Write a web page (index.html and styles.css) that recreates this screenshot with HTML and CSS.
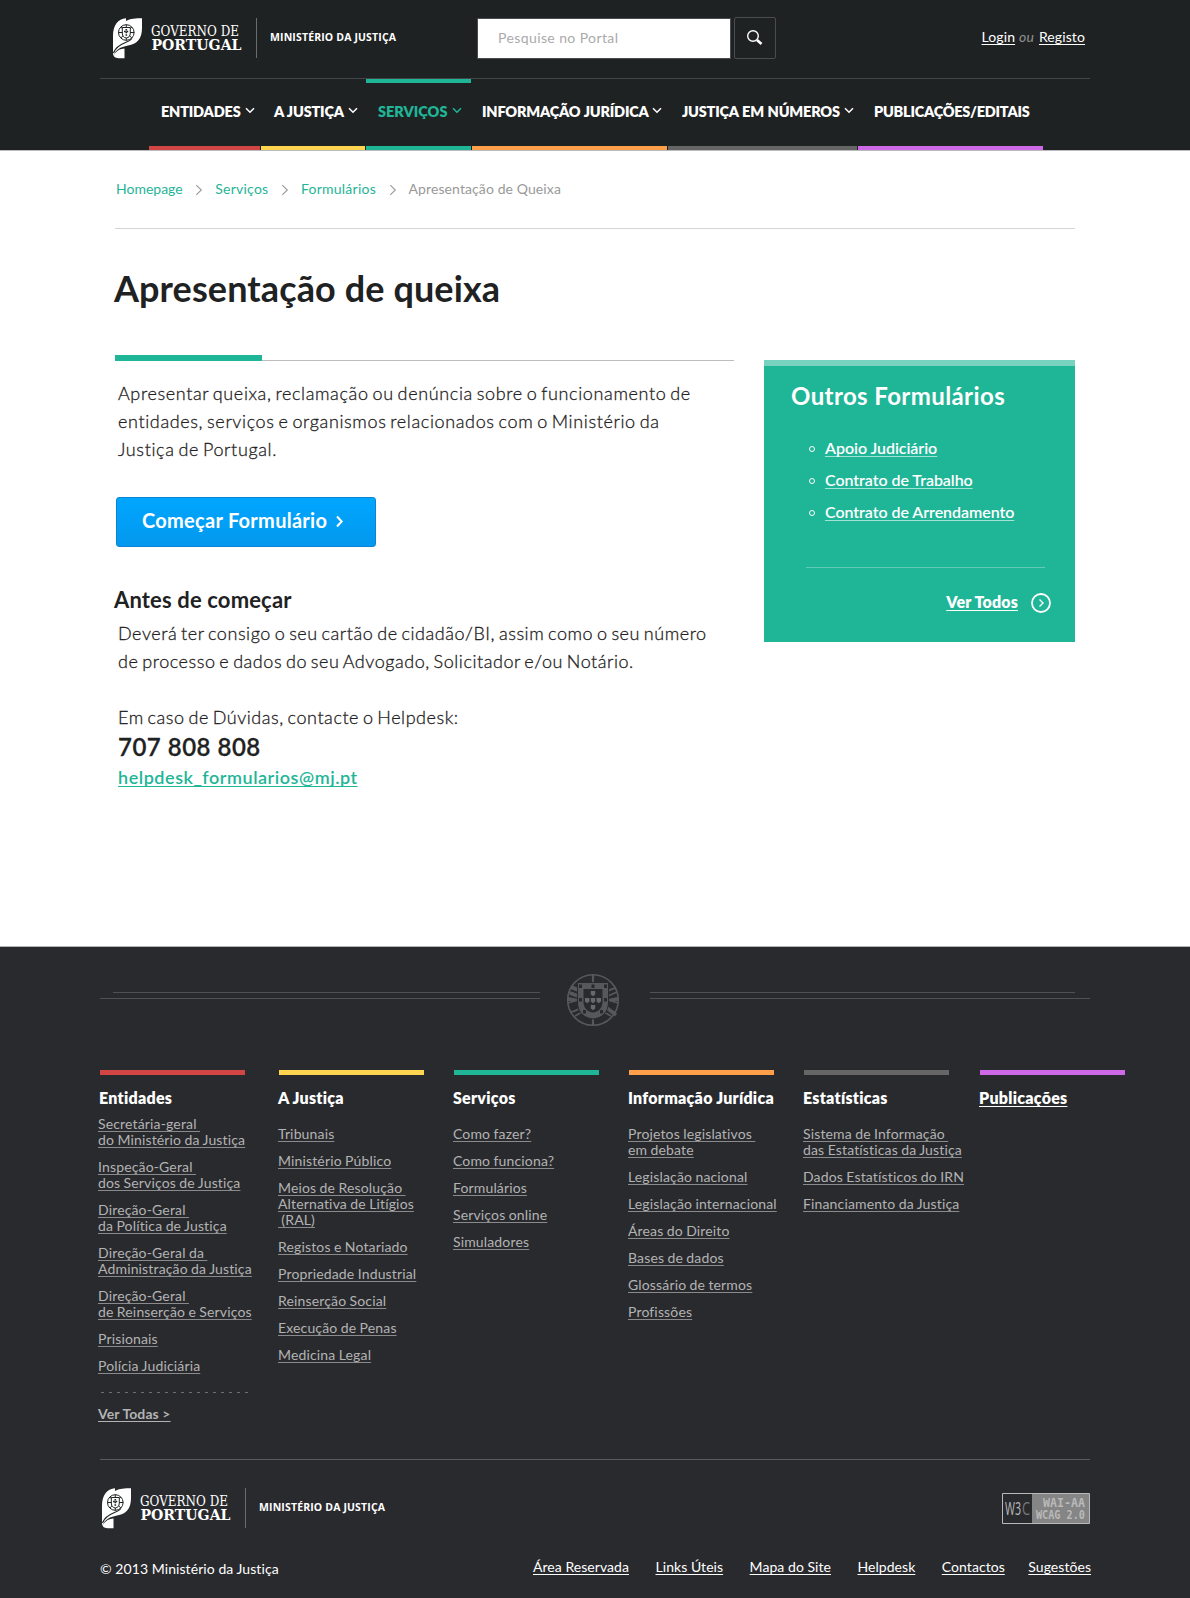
FILE: index.html
```html
<!DOCTYPE html>
<html lang="pt">
<head>
<meta charset="utf-8">
<title>Apresentação de queixa</title>
<link rel="stylesheet" href="styles.css">
</head>
<body>
<svg width="0" height="0" class="defs" aria-hidden="true">
  <defs>
    <symbol id="chevron-down" viewBox="0 0 10 7"><path d="M1 1.2l4 4 4-4" fill="none" stroke="currentColor" stroke-width="1.5"/></symbol>
    <symbol id="chevron-right" viewBox="0 0 8 12"><path d="M1.3 1.2L6.3 6l-5 4.8" fill="none" stroke="currentColor" stroke-width="1.1"/></symbol>
    <symbol id="gov-logo" viewBox="0 0 290 42">
      <path d="M0 38V18C0 7 5 1 13 .2V3C17 .5 23 .2 29 .2V10c0 11-5 16-14 17.500C7 29 2.500 32 1 37c3-5 6-6 10.500-6.500V40.300H7C3 40.300 1 39.500 0 36z" fill="#fff"/>
      <path d="M.5 35c2-6 7-8.500 12-10.500 3-1.200 5-2 6.500-4" fill="none" stroke="#1f2223" stroke-width="1.200"/>
      <g fill="none" stroke="#1f2223" stroke-width="1"><circle cx="13.300" cy="14.500" r="7.800"/><path d="M13.300 6.500v16M5.300 14.500h16M7.800 9l11 11M18.800 9l-11 11"/></g>
      <path d="M9.300 9.500h8V15c0 3-1.500 4.700-4 5-2.500-.3-4-2-4-5z" fill="#fff" stroke="#1f2223"/>
      <path d="M13.300 11v7M11 13.500h4.600" stroke="#1f2223" stroke-width="1.600" stroke-dasharray="1.600 1"/>
      <text x="38" y="18" class="gov-light" textLength="88" lengthAdjust="spacingAndGlyphs">GOVERNO DE</text>
      <text x="38.500" y="32.300" class="gov-bold" textLength="90" lengthAdjust="spacingAndGlyphs">PORTUGAL</text>
      <path d="M143.500 0v40" stroke="#6a6d6e"/>
      <text x="157" y="23" class="gov-ministry" textLength="126" lengthAdjust="spacing">MINISTÉRIO DA JUSTIÇA</text>
    </symbol>
  </defs>
</svg>

<header class="site-header">
  <div class="topbar">
    <svg class="gov-logo" width="290" height="42"><use href="#gov-logo"/></svg>
    <form class="search">
      <span class="search-field">Pesquise no Portal</span>
      <span class="search-button"><svg width="18" height="18" viewBox="0 0 18 18"><circle cx="7" cy="7" r="5.300" fill="none" stroke="#fff" stroke-width="1.400"/><path d="M11 11l4.500 4" stroke="#fff" stroke-width="2.600"/></svg></span>
    </form>
    <div class="account"><a href="#">Login</a><em>ou</em><a href="#">Registo</a></div>
  </div>
  <nav class="main-nav">
    <a class="nav-item red" href="#"><span>ENTIDADES</span><svg width="10" height="7"><use href="#chevron-down"/></svg></a>
    <a class="nav-item yellow" href="#"><span>A JUSTIÇA</span><svg width="10" height="7"><use href="#chevron-down"/></svg></a>
    <a class="nav-item green active" href="#"><span>SERVIÇOS</span><svg width="10" height="7"><use href="#chevron-down"/></svg></a>
    <a class="nav-item orange" href="#"><span>INFORMAÇÃO JURÍDICA</span><svg width="10" height="7"><use href="#chevron-down"/></svg></a>
    <a class="nav-item gray" href="#"><span>JUSTIÇA EM NÚMEROS</span><svg width="10" height="7"><use href="#chevron-down"/></svg></a>
    <a class="nav-item purple" href="#"><span>PUBLICAÇÕES/EDITAIS</span></a>
  </nav>
</header>

<main class="page">
  <nav class="breadcrumb">
    <a href="#">Homepage</a><svg width="8" height="12"><use href="#chevron-right"/></svg><a class="parent" href="#">Serviços</a><svg width="8" height="12"><use href="#chevron-right"/></svg><a class="parent" href="#">Formulários</a><svg width="8" height="12"><use href="#chevron-right"/></svg><span>Apresentação de Queixa</span>
  </nav>
  <h1>Apresentação de queixa</h1>
  <div class="columns">
    <article class="content">
      <div class="accent"></div>
      <p class="lead">Apresentar queixa, reclamação ou denúncia sobre o funcionamento de<br>entidades, serviços e organismos relacionados com o Ministério da<br>Justiça de Portugal.</p>
      <a class="button" href="#">Começar Formulário<svg width="9" height="13" viewBox="0 0 9 13"><path d="M2 1.500l4.700 5L2 11.500" fill="none" stroke="#fff" stroke-width="2"/></svg></a>
      <h2>Antes de começar</h2>
      <p>Deverá ter consigo o seu cartão de cidadão/BI, assim como o seu número<br>de processo e dados do seu Advogado, Solicitador e/ou Notário.</p>
      <p class="help">Em caso de Dúvidas, contacte o Helpdesk:</p>
      <div class="phone">707 808 808</div>
      <a class="mail" href="#">helpdesk_formularios@mj.pt</a>
    </article>
    <aside class="card">
      <h3>Outros Formulários</h3>
      <ul>
        <li><a href="#">Apoio Judiciário</a></li>
        <li><a href="#">Contrato de Trabalho</a></li>
        <li><a href="#">Contrato de Arrendamento</a></li>
      </ul>
      <div class="card-more"><a href="#">Ver Todos</a><svg width="20" height="20" viewBox="0 0 20 20" fill="none" stroke="#fff"><circle cx="10" cy="10" r="9" stroke-width="1.800"/><path d="M8.500 6.500L12 10l-3.500 3.500" stroke-width="1.400"/></svg></div>
    </aside>
  </div>
</main>

<footer class="site-footer">
  <div class="ornament">
    <div class="rules left"></div>
    <svg width="54" height="54" viewBox="0 0 54 54" fill="none" stroke="#57585b">
      <circle cx="27" cy="27" r="25.300" stroke-width="1.600"/>
      <path d="M27 1v52M1 27h52" stroke-width="2.200"/>
      <path d="M4 15c5 1 8 2 10 5M3 19l9 4M50 15c-5 1-8 2-10 5M51 19l-9 4M2 25l10 2-10 3M52 25l-10 2 10 3M5 39c4-1 8-2 11-6M9 43l9-5M49 39c-4-1-8-2-11-6M45 43l-9-5" stroke-width="1.800"/>
      <path d="M5 14l8 3M4 20l8 3M41 35l9 7" stroke-width="3.500"/>
      <path d="M11.500 9.500h31V29c0 10-6 16-15.500 17C17.500 45 11.500 39 11.500 29z" fill="#57585b" stroke="#292a2e"/>
      <path d="M17.500 16h19v13c0 6-4 10-9.500 10.500C21.500 39 17.500 35 17.500 29z" fill="#292a2e" stroke="none"/>
      <g fill="#68696c" stroke="none"><path d="M24.800 18h4.400v3.500L27 23.300l-2.200-1.800zM24.800 25h4.400v3.500L27 30.300l-2.200-1.800zM24.800 32h4.400v3.500L27 37.300l-2.200-1.800zM19 25h4.400v3.500l-2.200 1.800-2.200-1.800zM30.600 25H35v3.500l-2.200 1.800-2.200-1.800z"/></g>
      <g fill="#292a2e" stroke="none"><path d="M13 11.500h3V15h-3zM25.500 11.500h3V15h-3zM38 11.500h3V15h-3zM13 25h3v3.500h-3zM38 25h3v3.500h-3zM17 37h3v3.500h-3zM34 37h3v3.500h-3z"/></g>
    </svg>
    <div class="rules right"></div>
  </div>
  <div class="sitemap">
    <section class="red first"><h4>Entidades</h4>
      <ul>
        <li><a href="#">Secretária-geral&nbsp;<br>do Ministério da Justiça</a></li>
        <li><a href="#">Inspeção-Geral&nbsp;<br>dos Serviços de Justiça</a></li>
        <li><a href="#">Direção-Geral&nbsp;<br>da Política de Justiça</a></li>
        <li><a href="#">Direção-Geral da&nbsp;<br>Administração da Justiça</a></li>
        <li><a href="#">Direção-Geral&nbsp;<br>de Reinserção e Serviços</a></li>
        <li><a href="#">Prisionais</a></li>
        <li><a href="#">Polícia Judiciária</a></li>
      </ul>
      <div class="dashes"></div>
      <a class="all" href="#">Ver Todas &gt;</a>
    </section>
    <section class="yellow"><h4>A Justiça</h4>
      <ul>
        <li><a href="#">Tribunais</a></li>
        <li><a href="#">Ministério Público</a></li>
        <li><a href="#">Meios de Resolução&nbsp;<br>Alternativa de Litígios<br>&nbsp;(RAL)</a></li>
        <li><a href="#">Registos e Notariado</a></li>
        <li><a href="#">Propriedade Industrial</a></li>
        <li><a href="#">Reinserção Social</a></li>
        <li><a href="#">Execução de Penas</a></li>
        <li><a href="#">Medicina Legal</a></li>
      </ul>
    </section>
    <section class="green"><h4>Serviços</h4>
      <ul>
        <li><a href="#">Como fazer?</a></li>
        <li><a href="#">Como funciona?</a></li>
        <li><a href="#">Formulários</a></li>
        <li><a href="#">Serviços online</a></li>
        <li><a href="#">Simuladores</a></li>
      </ul>
    </section>
    <section class="orange"><h4>Informação Jurídica</h4>
      <ul>
        <li><a href="#">Projetos legislativos&nbsp;<br>em debate</a></li>
        <li><a href="#">Legislação nacional</a></li>
        <li><a href="#">Legislação internacional</a></li>
        <li><a href="#">Áreas do Direito</a></li>
        <li><a href="#">Bases de dados</a></li>
        <li><a href="#">Glossário de termos</a></li>
        <li><a href="#">Profissões</a></li>
      </ul>
    </section>
    <section class="gray"><h4>Estatísticas</h4>
      <ul>
        <li><a href="#">Sistema de Informação&nbsp;<br>das Estatísticas da Justiça</a></li>
        <li><a href="#">Dados Estatísticos do IRN</a></li>
        <li><a href="#">Financiamento da Justiça</a></li>
      </ul>
    </section>
    <section class="purple"><h4><a href="#">Publicações</a></h4></section>
  </div>
  <div class="closing">
    <div class="closing-logos">
      <svg class="gov-logo" width="290" height="42"><use href="#gov-logo"/></svg>
      <svg width="88" height="31" viewBox="0 0 88 31">
        <path d="M.5.5h87v30H.5z" fill="#292a2e" stroke="#b9b9b9"/>
        <path d="M30 1h57v29H30z" fill="#858585"/>
        <text x="3" y="22" class="w3" textLength="16" lengthAdjust="spacingAndGlyphs">W3</text>
        <text x="20" y="22" class="w3 dim" textLength="8" lengthAdjust="spacingAndGlyphs">C</text>
        <text x="41" y="14" class="wai" textLength="42" lengthAdjust="spacingAndGlyphs">WAI-AA</text>
        <text x="34" y="26" class="wai" textLength="49" lengthAdjust="spacingAndGlyphs">WCAG 2.0</text>
      </svg>
    </div>
    <div class="closing-links">
      <span class="copyright">© 2013 Ministério da Justiça</span>
      <nav><a href="#">Área Reservada</a><a href="#">Links Úteis</a><a href="#">Mapa do Site</a><a href="#">Helpdesk</a><a href="#">Contactos</a><a href="#">Sugestões</a></nav>
    </div>
  </div>
</footer>
</body>
</html>
```
FILE: styles.css
```css
*, *::before { box-sizing: border-box; margin: 0; padding: 0; }
body { width: 1190px; font-family: Lato, "Open Sans", sans-serif; font-size: 14px; font-variant-ligatures: none; color: #1f2223; background: #fff; }
a { color: inherit; text-underline-offset: 2px; text-decoration-thickness: 1px; text-decoration-skip-ink: none; }
ul { list-style: none; }
svg { display: block; flex: none; }
.defs { position: absolute; }

.red { --tone: #d24545; }
.yellow { --tone: #ffd54f; }
.green { --tone: #1fb597; }
.orange { --tone: #ff9f4a; }
.gray { --tone: #666; }
.purple { --tone: #cf68e6; }

/* Header */
.site-header { height: 151px; background: #1f2223; border-bottom: 1px solid #babcbc; }
.topbar { width: 990px; height: 79px; margin: 0 auto; padding: 17px 5px 0 13px; display: flex; border-bottom: 1px solid #434647; }
.topbar .gov-logo { margin-top: 1px; }
.gov-light { font: 14px "DejaVu Serif", serif; fill: #fff; }
.gov-bold { font: bold 15.500px "DejaVu Serif", serif; fill: #fff; }
.gov-ministry { font: bold 10.500px "Open Sans", sans-serif; font-stretch: 90%; fill: #fff; }
.search { display: flex; gap: 3px; margin-left: 74px; }
.search-field { width: 254px; height: 41px; margin-top: 1px; padding-left: 20px; border: 1px solid #4a4c4d; background: #fff; color: #aaa; line-height: 38px; letter-spacing: .4px; }
.search-button { width: 42px; height: 42px; border: 1px solid #4a4c4d; border-radius: 2px; padding: 11px 0 0 11px; }
.account { margin-left: auto; display: flex; color: #fff; line-height: 20px; padding-top: 10px; letter-spacing: .1px; }
.account em { color: #8f9192; margin: 0 5px 0 4px; }

.main-nav { width: 894px; height: 71px; margin: 0 auto; padding-left: 1px; display: grid; grid-template-columns: 111px 104px 105px 195px 189px 185px; column-gap: 1px; }
.nav-item { display: flex; padding: 17px 5px 0 12px; border-top: 4px solid transparent; border-bottom: 4px solid var(--tone); color: #fff; font-size: 14.500px; font-weight: 800; line-height: 24px; letter-spacing: -.2px; word-spacing: .5px; text-decoration: none; white-space: nowrap; justify-content: space-between; }
.nav-item svg { margin-top: 7px; }
.nav-item.active { color: var(--tone); border-top-color: var(--tone); padding-right: 9px; letter-spacing: 0; }
.nav-item.yellow { padding: 17px 7px 0 13px; }
.nav-item.orange { padding: 17px 5px 0 10px; }
.nav-item.gray { padding: 17px 3px 0 14px; }
.nav-item.purple { padding-left: 16px; letter-spacing: -.25px; }

/* Page */
.page { width: 960px; height: 795px; margin: 0 auto; padding-top: 28px; }
.breadcrumb { height: 50px; padding-left: 1px; display: flex; line-height: 20px; color: #999; border-bottom: 1px solid #d5d5d5; }
.breadcrumb a { color: #1fb597; text-decoration: none; }
.breadcrumb .parent { letter-spacing: .25px; }
.breadcrumb span { letter-spacing: .1px; }
.breadcrumb svg { margin: 5px 12px 0 12.500px; }
h1 { margin: 37px 0 0 -1px; font-size: 36px; line-height: 44px; font-weight: 700; letter-spacing: .1px; }
.columns { display: flex; justify-content: space-between; margin-top: 45px; }
.content { width: 619px; }
.content p { padding-left: 3px; font-size: 18px; line-height: 28px; font-weight: 300; letter-spacing: .55px; word-spacing: -1.600px; -webkit-text-stroke: .3px #1f2223; white-space: nowrap; }
.content .lead { letter-spacing: .63px; }
.accent { height: 6px; margin-bottom: 18px; background: linear-gradient(#1fb597, #1fb597) left / 147px 6px no-repeat, linear-gradient(#bdbdbd, #bdbdbd) left bottom / 100% 1px no-repeat; }
.button { display: flex; align-items: center; width: 260px; height: 50px; margin: 34px 0 0 1px; padding: 0 0 4px 25px; gap: 8px; border: 1px solid #0b85d3; border-radius: 3px; background: linear-gradient(#00a6ff, #0498ee); color: #fff; font-size: 20px; font-weight: 700; letter-spacing: .28px; text-decoration: none; }
.button svg { margin-top: 3px; }
h2 { margin: 39px 0 5px -1px; font-size: 22px; line-height: 28px; font-weight: 700; letter-spacing: .15px; }
.content .help { margin-top: 28px; }
.phone { margin-top: 1px; padding-left: 3px; font-size: 24px; line-height: 30px; font-weight: 600; letter-spacing: .5px; -webkit-text-stroke: .3px #1f2223; }
.mail { display: inline-block; margin: 1px 0 0 3px; font-size: 18px; line-height: 28px; font-weight: 600; letter-spacing: .54px; color: #1fb597; }
.card { width: 311px; height: 282px; margin-top: 5px; padding: 14px 24px 0 27px; border-top: 6px solid #77d2c0; background: #1fb597; color: #fff; }
.card h3 { font-size: 24px; line-height: 32px; font-weight: 700; letter-spacing: .4px; }
.card ul { margin: 21px 0 0 15px; padding-bottom: 38px; border-bottom: 1px solid #62cbb6; width: 239px; }
.card li { display: flex; align-items: center; height: 32px; padding-left: 3px; gap: 10px; font-size: 16px; font-weight: 600; letter-spacing: -.05px; }
.card li::before { content: ""; width: 6px; height: 6px; margin-top: -1px; border: 1px solid #fff; border-radius: 50%; }
.card li a { margin-top: -4px; text-decoration-color: #a5e1d5; white-space: nowrap; }
.card-more { display: flex; justify-content: flex-end; gap: 13px; margin-top: 24px; font-size: 16px; line-height: 20px; font-weight: 800; letter-spacing: .15px; }
.card-more svg { margin-top: 1px; }

/* Footer */
.site-footer { height: 652px; background: #292a2e; border-top: 1px solid #b4b5b6; }
.ornament { width: 990px; height: 123px; margin: 0 auto; padding-top: 25px; display: flex; }
.ornament svg { margin: 1px 30px 0 26px; }
.rules { width: 440px; height: 7px; margin-top: 20px; background: linear-gradient(#505154, #505154) 13px 0 / 427px 1px no-repeat, linear-gradient(#505154, #505154) 0 6px / 100% 1px no-repeat; }
.rules.right { background-position: -2px 0, 0 6px; }
.sitemap { display: grid; grid-template-columns: 179px 175px 175px 175px 176px 145px; margin-left: 100px; height: 389px; }
.sitemap section::before { content: ""; display: block; width: 145px; height: 5px; background: var(--tone); }
.sitemap h4 { margin: 13px 0 18px -1px; font-size: 16px; line-height: 20px; font-weight: 800; letter-spacing: .25px; color: #fff; white-space: nowrap; }
.sitemap ul { margin-left: -1px; display: grid; gap: 11px; line-height: 16px; letter-spacing: .15px; word-spacing: -.4px; color: #b3b3b3; white-space: nowrap; }
.sitemap .first h4 { margin-bottom: 8px; }
.sitemap .first ul { margin-left: -2px; }
.sitemap ul a { text-decoration-color: #8a8a8d; }
.dashes { height: 1px; width: 147px; margin: 18px 0 12px 1px; background: repeating-linear-gradient(90deg, #6c6d70 0 3px, transparent 3px 8px); }
.all { margin-left: -2px; display: inline-block; line-height: 16px; font-weight: 700; letter-spacing: .1px; color: #b3b3b3; }
.closing { width: 990px; margin: 0 auto; border-top: 1px solid #5a5b5e; padding-top: 28px; }
.closing-logos { display: flex; justify-content: space-between; padding-left: 2px; }
.closing-logos svg + svg { margin-top: 5px; }
.w3 { font: 18px "Open Sans", sans-serif; fill: #b9b9b9; }
.w3.dim { fill: #77787a; }
.wai { font: bold 11.500px "DejaVu Sans Mono", monospace; fill: #b9b9b9; }
.closing-links { display: flex; justify-content: space-between; margin-top: 27px; line-height: 20px; color: #fff; }
.copyright { padding-top: 2px; letter-spacing: .07px; }
.closing-links nav { display: flex; gap: 26.500px; margin-right: -1px; letter-spacing: .05px; }
.closing-links nav a:last-child { margin-left: -3px; }
```
